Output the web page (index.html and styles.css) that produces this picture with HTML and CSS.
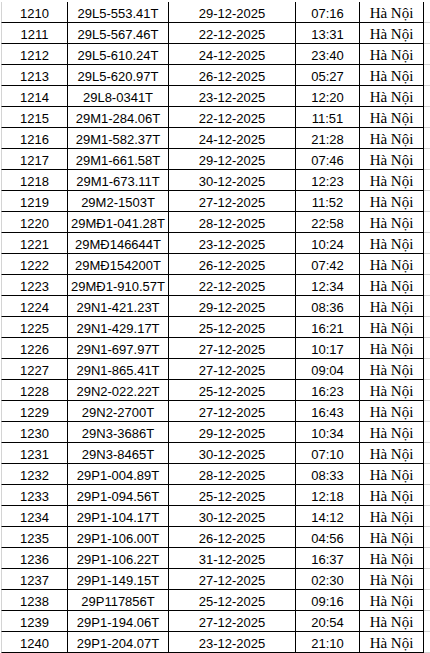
FILE: index.html
```html
<!DOCTYPE html>
<html lang="vi">
<head>
<meta charset="utf-8">
<title>Danh sách</title>
<link rel="stylesheet" href="styles.css">
</head>
<body>
<div class="sheet">
<table class="grid">
<tbody>
<tr><td class="c1">1210</td><td class="c2">29L5-553.41T</td><td class="c3">29-12-2025</td><td class="c4">07:16</td><td class="c5">Hà Nội</td><td class="cx"></td></tr>
<tr><td class="c1">1211</td><td class="c2">29L5-567.46T</td><td class="c3">22-12-2025</td><td class="c4">13:31</td><td class="c5">Hà Nội</td><td class="cx"></td></tr>
<tr><td class="c1">1212</td><td class="c2">29L5-610.24T</td><td class="c3">24-12-2025</td><td class="c4">23:40</td><td class="c5">Hà Nội</td><td class="cx"></td></tr>
<tr><td class="c1">1213</td><td class="c2">29L5-620.97T</td><td class="c3">26-12-2025</td><td class="c4">05:27</td><td class="c5">Hà Nội</td><td class="cx"></td></tr>
<tr><td class="c1">1214</td><td class="c2">29L8-0341T</td><td class="c3">23-12-2025</td><td class="c4">12:20</td><td class="c5">Hà Nội</td><td class="cx"></td></tr>
<tr><td class="c1">1215</td><td class="c2">29M1-284.06T</td><td class="c3">22-12-2025</td><td class="c4">11:51</td><td class="c5">Hà Nội</td><td class="cx"></td></tr>
<tr><td class="c1">1216</td><td class="c2">29M1-582.37T</td><td class="c3">24-12-2025</td><td class="c4">21:28</td><td class="c5">Hà Nội</td><td class="cx"></td></tr>
<tr><td class="c1">1217</td><td class="c2">29M1-661.58T</td><td class="c3">29-12-2025</td><td class="c4">07:46</td><td class="c5">Hà Nội</td><td class="cx"></td></tr>
<tr><td class="c1">1218</td><td class="c2">29M1-673.11T</td><td class="c3">30-12-2025</td><td class="c4">12:23</td><td class="c5">Hà Nội</td><td class="cx"></td></tr>
<tr><td class="c1">1219</td><td class="c2">29M2-1503T</td><td class="c3">27-12-2025</td><td class="c4">11:52</td><td class="c5">Hà Nội</td><td class="cx"></td></tr>
<tr><td class="c1">1220</td><td class="c2">29MĐ1-041.28T</td><td class="c3">28-12-2025</td><td class="c4">22:58</td><td class="c5">Hà Nội</td><td class="cx"></td></tr>
<tr><td class="c1">1221</td><td class="c2">29MĐ146644T</td><td class="c3">23-12-2025</td><td class="c4">10:24</td><td class="c5">Hà Nội</td><td class="cx"></td></tr>
<tr><td class="c1">1222</td><td class="c2">29MĐ154200T</td><td class="c3">26-12-2025</td><td class="c4">07:42</td><td class="c5">Hà Nội</td><td class="cx"></td></tr>
<tr><td class="c1">1223</td><td class="c2">29MĐ1-910.57T</td><td class="c3">22-12-2025</td><td class="c4">12:34</td><td class="c5">Hà Nội</td><td class="cx"></td></tr>
<tr><td class="c1">1224</td><td class="c2">29N1-421.23T</td><td class="c3">29-12-2025</td><td class="c4">08:36</td><td class="c5">Hà Nội</td><td class="cx"></td></tr>
<tr><td class="c1">1225</td><td class="c2">29N1-429.17T</td><td class="c3">25-12-2025</td><td class="c4">16:21</td><td class="c5">Hà Nội</td><td class="cx"></td></tr>
<tr><td class="c1">1226</td><td class="c2">29N1-697.97T</td><td class="c3">27-12-2025</td><td class="c4">10:17</td><td class="c5">Hà Nội</td><td class="cx"></td></tr>
<tr><td class="c1">1227</td><td class="c2">29N1-865.41T</td><td class="c3">27-12-2025</td><td class="c4">09:04</td><td class="c5">Hà Nội</td><td class="cx"></td></tr>
<tr><td class="c1">1228</td><td class="c2">29N2-022.22T</td><td class="c3">25-12-2025</td><td class="c4">16:23</td><td class="c5">Hà Nội</td><td class="cx"></td></tr>
<tr><td class="c1">1229</td><td class="c2">29N2-2700T</td><td class="c3">27-12-2025</td><td class="c4">16:43</td><td class="c5">Hà Nội</td><td class="cx"></td></tr>
<tr><td class="c1">1230</td><td class="c2">29N3-3686T</td><td class="c3">29-12-2025</td><td class="c4">10:34</td><td class="c5">Hà Nội</td><td class="cx"></td></tr>
<tr><td class="c1">1231</td><td class="c2">29N3-8465T</td><td class="c3">30-12-2025</td><td class="c4">07:10</td><td class="c5">Hà Nội</td><td class="cx"></td></tr>
<tr><td class="c1">1232</td><td class="c2">29P1-004.89T</td><td class="c3">28-12-2025</td><td class="c4">08:33</td><td class="c5">Hà Nội</td><td class="cx"></td></tr>
<tr><td class="c1">1233</td><td class="c2">29P1-094.56T</td><td class="c3">25-12-2025</td><td class="c4">12:18</td><td class="c5">Hà Nội</td><td class="cx"></td></tr>
<tr><td class="c1">1234</td><td class="c2">29P1-104.17T</td><td class="c3">30-12-2025</td><td class="c4">14:12</td><td class="c5">Hà Nội</td><td class="cx"></td></tr>
<tr><td class="c1">1235</td><td class="c2">29P1-106.00T</td><td class="c3">26-12-2025</td><td class="c4">04:56</td><td class="c5">Hà Nội</td><td class="cx"></td></tr>
<tr><td class="c1">1236</td><td class="c2">29P1-106.22T</td><td class="c3">31-12-2025</td><td class="c4">16:37</td><td class="c5">Hà Nội</td><td class="cx"></td></tr>
<tr><td class="c1">1237</td><td class="c2">29P1-149.15T</td><td class="c3">27-12-2025</td><td class="c4">02:30</td><td class="c5">Hà Nội</td><td class="cx"></td></tr>
<tr><td class="c1">1238</td><td class="c2">29P117856T</td><td class="c3">25-12-2025</td><td class="c4">09:16</td><td class="c5">Hà Nội</td><td class="cx"></td></tr>
<tr><td class="c1">1239</td><td class="c2">29P1-194.06T</td><td class="c3">27-12-2025</td><td class="c4">20:54</td><td class="c5">Hà Nội</td><td class="cx"></td></tr>
<tr><td class="c1">1240</td><td class="c2">29P1-204.07T</td><td class="c3">23-12-2025</td><td class="c4">21:10</td><td class="c5">Hà Nội</td><td class="cx"></td></tr>
</tbody>
</table>
</div>
</body>
</html>
```

FILE: styles.css
```css
html, body {
  margin: 0;
  padding: 0;
  background: #ffffff;
}

.sheet {
  padding: 2px 0 0 1px;
  width: 430px;
  height: 653px;
  box-sizing: border-box;
  overflow: hidden;
}

.grid {
  border-collapse: separate;
  border-spacing: 0;
  table-layout: fixed;
  font-family: "Liberation Sans", Arial, sans-serif;
  font-size: 13px;
  color: #000000;
}

.grid td {
  padding: 3px 0 0 0;
  height: 17px;
  line-height: 17px;
  text-align: center;
  vertical-align: top;
  white-space: nowrap;
  overflow: hidden;
  border-right: 1px solid #000000;
  border-bottom: 1px solid #000000;
}

.grid .c1 {
  width: 65px;
  border-left: 1px solid #d4d4d4;
}

.grid .c2 {
  width: 100px;
}

.grid .c3 {
  width: 126px;
}

.grid .c4 {
  width: 63px;
}

.grid .c5 {
  width: 63px;
  font-family: "Liberation Serif", "Times New Roman", serif;
  font-size: 15px;
}

.grid .cx {
  width: 6px;
  border-right: none;
  border-bottom: 1px solid #d4d4d4;
}
```
